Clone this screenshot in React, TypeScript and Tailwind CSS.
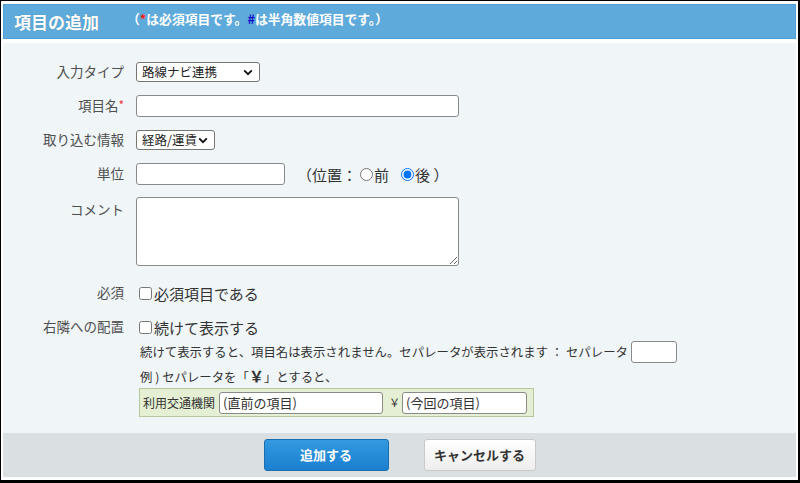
const font = 'font-["Noto_Sans_CJK_JP","Noto_Sans",sans-serif]'

function Chevron() {
  return (
    <svg width="10" height="7" viewBox="0 0 10 7" className="shrink-0">
      <path d="M1.2 1.3 L5 5.2 L8.8 1.3" fill="none" stroke="#111" strokeWidth="1.8" />
    </svg>
  )
}

function FakeSelect({ value, width }: { value: string; width: string }) {
  return (
    <div
      className={`${width} h-[20px] flex items-center justify-between pl-[5px] pr-[6px] bg-white border border-[#767676] rounded-[3px] text-[12.5px] text-[#222] leading-none`}
    >
      <span>{value}</span>
      <Chevron />
    </div>
  )
}

function Row({
  label,
  required,
  className = '',
  top,
  children,
}: {
  label?: string
  required?: boolean
  className?: string
  top?: boolean
  children: React.ReactNode
}) {
  return (
    <div className={`flex ${top ? 'items-start' : 'items-center'} ${className}`}>
      <div
        className={`w-[121px] shrink-0 text-right text-[13.5px] text-[#4f4f4f] leading-none ${top ? 'pt-[6px]' : ''}`}
      >
        {label}
        {required && <span className="text-[#e8383d] align-top text-[12px]">*</span>}
      </div>
      <div className="ml-[12px] flex items-center">{children}</div>
    </div>
  )
}

const inputCls = 'bg-white border border-[#8a8a8a] rounded-[3px] outline-none'

export default function App() {
  return (
    <div
      className={`w-[800px] h-[483px] bg-white border-l border-t border-r-2 border-b-[3px] border-black px-[2px] pt-[3px] pb-[3px] flex flex-col ${font}`}
    >
      {/* header */}
      <div className="h-[35px] shrink-0 bg-[#5eaadb] border border-[#4e9fd6] flex items-center pl-[10px]">
        <h1 className="text-[17px] font-bold text-white leading-none [text-shadow:0_0_1px_rgba(0,0,0,0.25)]">
          項目の追加
        </h1>
        <p className="ml-[28px] -mt-[5px] text-[12.8px] font-bold text-white leading-none">
          （<span className="text-[#ff1a1a]">*</span>は必須項目です。
          <span className="text-[#1010c8]">#</span>は半角数値項目です。）
        </p>
      </div>

      {/* form */}
      <div className="mt-[4px] h-[390px] shrink-0 bg-[#f0f5f8] pt-[12px] flex flex-col">
        <Row label="入力タイプ" className="h-[34px]">
          <FakeSelect value="路線ナビ連携" width="w-[124px]" />
        </Row>
        <Row label="項目名" required className="h-[34px]">
          <input className={`${inputCls} w-[323px] h-[22px]`} />
        </Row>
        <Row label="取り込む情報" className="h-[34px]">
          <FakeSelect value="経路/運賃" width="w-[79px]" />
        </Row>
        <Row label="単位" className="h-[34px]">
          <input className={`${inputCls} w-[149px] h-[22px]`} />
          <span className="ml-[12px] flex items-center text-[15px] text-[#333] leading-none">
            （位置：
            <input type="radio" name="pos" className="m-0 ml-[3px] mr-[1px] w-[13px] h-[13px]" />
            前
            <input type="radio" name="pos" defaultChecked className="m-0 ml-[12px] mr-[1px] w-[13px] h-[13px]" />
            後 ）
          </span>
        </Row>
        <Row label="コメント" top className="pt-[6px] pb-[10px]">
          <textarea className={`${inputCls} w-[323px] h-[69px] resize block`} />
        </Row>
        <Row label="必須" className="h-[34px]">
          <label className="flex items-center gap-[2px] text-[15px] text-[#333] leading-none ml-[3px]">
            <input type="checkbox" className="m-0 w-[13px] h-[13px]" />
            必須項目である
          </label>
        </Row>
        <Row label="右隣への配置" className="h-[28px] mt-[3px]">
          <label className="flex items-center gap-[2px] text-[15px] text-[#333] leading-none ml-[3px]">
            <input type="checkbox" className="m-0 w-[13px] h-[13px]" />
            続けて表示する
          </label>
        </Row>
        <div className="h-[22px] ml-[136px] flex items-center text-[12.4px] text-[#333] leading-none">
          <span className="ml-[1px]">続けて表示すると、項目名は表示されません。セパレータが表示されます ： セパレータ</span>
          <input className={`${inputCls} ml-[3px] w-[46px] h-[22px]`} />
        </div>
        <div className="h-[25px] ml-[136px] flex items-center text-[12.4px] text-[#333] leading-none">
          <span className="ml-[1px]">
            例 ) セパレータを「<span className="font-bold text-[15px]">￥</span>」とすると、
          </span>
        </div>
        <div className="ml-[136px] w-[395px] h-[29px] bg-[#e5efd3] border border-[#b6c89b] flex items-center pl-[3px] text-[12px] text-[#333] leading-none">
          <span>利用交通機関</span>
          <div className={`${inputCls} ml-[4px] w-[164px] h-[22px] flex items-center pl-[3px] text-[13px]`}>
            (直前の項目)
          </div>
          <span className="ml-[6px] text-[11px]">￥</span>
          <div className={`${inputCls} ml-[2px] w-[125px] h-[22px] flex items-center pl-[3px] text-[13px]`}>
            (今回の項目)
          </div>
        </div>
      </div>

      {/* footer */}
      <div className="h-[44px] shrink-0 bg-[#dadfe2] flex items-center justify-center gap-[35px]">
        <button
          type="button"
          className="w-[125px] h-[32px] rounded-[3px] border border-[#1b6ead] bg-gradient-to-b from-[#3399e0] to-[#1a7fcf] text-white text-[13px] font-bold"
        >
          追加する
        </button>
        <button
          type="button"
          className="w-[112px] h-[32px] rounded-[3px] border border-[#c9c9c9] bg-gradient-to-b from-white to-[#ededed] text-[#333] text-[13px] font-bold"
        >
          キャンセルする
        </button>
      </div>
    </div>
  )
}
